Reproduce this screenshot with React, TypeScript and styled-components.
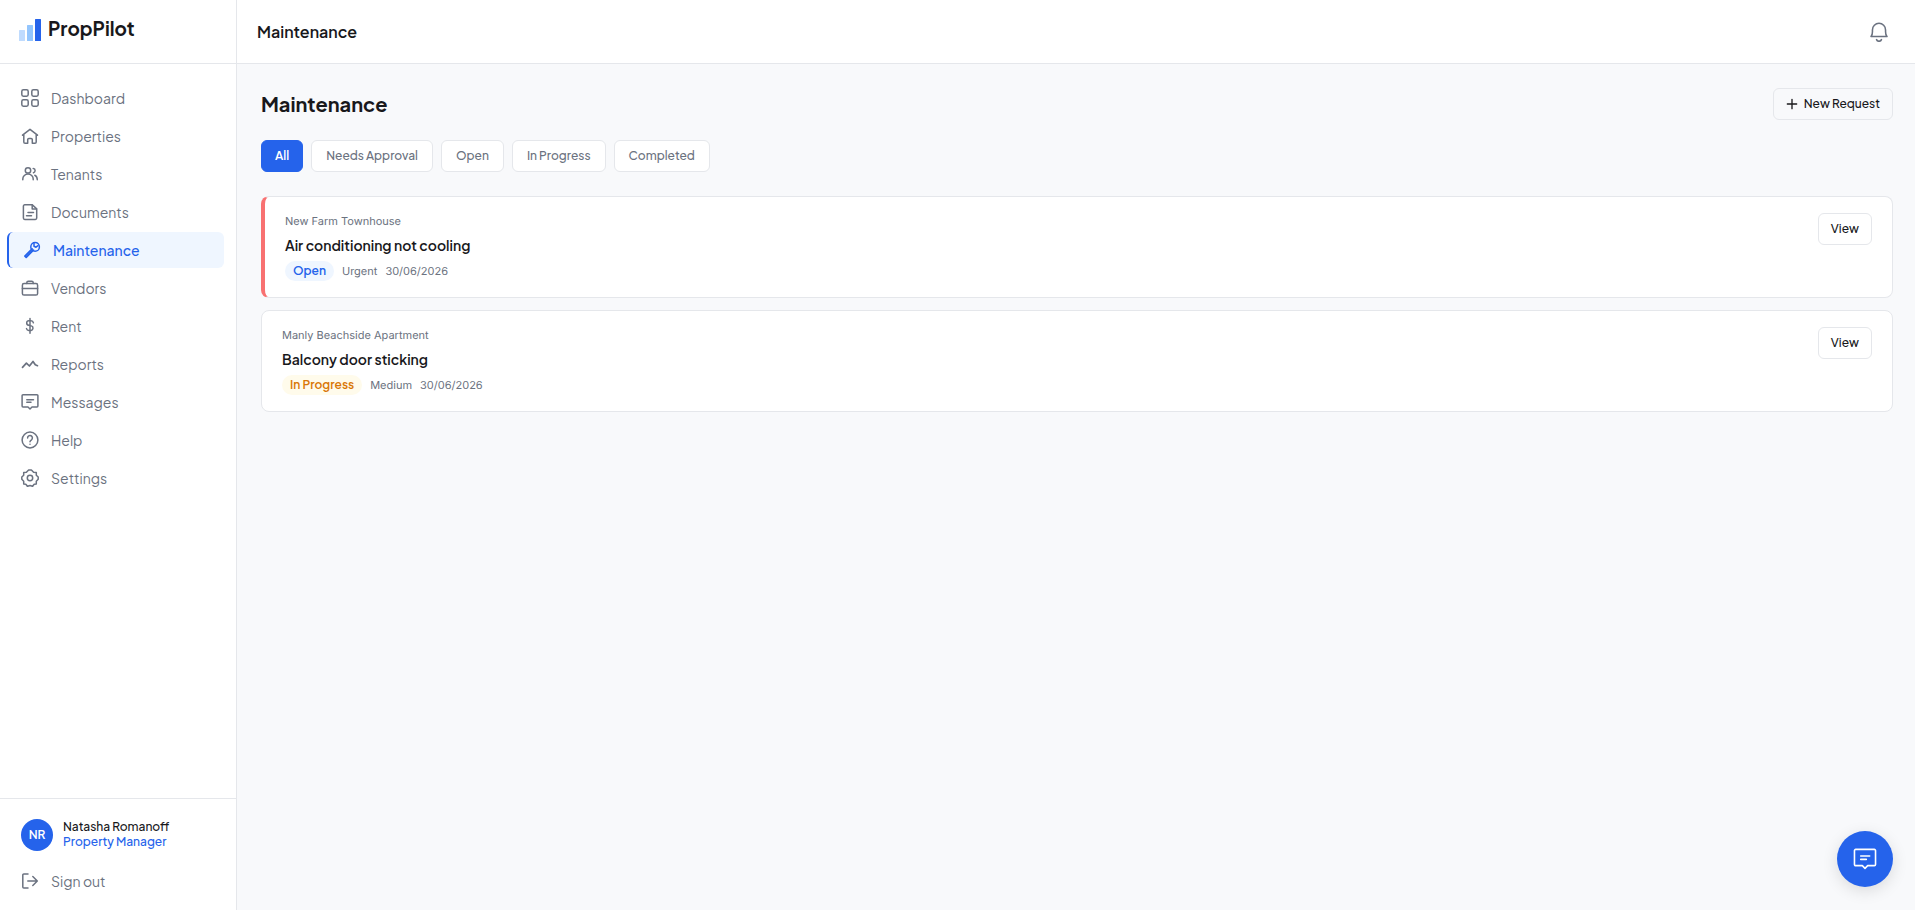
import React, { useState } from "react";
import styled, { createGlobalStyle, css } from "styled-components";

const color = {
  blue: "#2563eb",
  blueSoft: "#eff6ff",
  ink: "#18181b",
  muted: "#6b7280",
  line: "#e5e7eb",
  page: "#f8f9fb",
  red: "#f87171",
  amber: "#d97706",
  amberSoft: "#fffbeb",
};

const GlobalStyle = createGlobalStyle`
  *, *::before, *::after { box-sizing: border-box; }
  body {
    margin: 0;
    background: ${color.page};
    color: ${color.ink};
    font-family: "Plus Jakarta Sans", Inter, "Liberation Sans", sans-serif;
    font-size: 14px;
    line-height: 20px;
  }
  button { font-family: inherit; cursor: pointer; }
  h1, h2, p, ul { margin: 0; padding: 0; }
  ul { list-style: none; }
`;

const Shell = styled.div`
  display: flex;
  min-height: 100vh;
`;

const Sidebar = styled.aside`
  position: sticky;
  top: 0;
  flex: none;
  display: flex;
  flex-direction: column;
  width: 237px;
  height: 100vh;
  background: #fff;
  border-right: 1px solid ${color.line};
`;

const Brand = styled.a`
  flex: none;
  display: flex;
  align-items: flex-start;
  gap: 7px;
  height: 64px;
  padding: 19px 19px 0;
  border-bottom: 1px solid ${color.line};
  color: ${color.ink};
  font-size: 19px;
  line-height: 18px;
  font-weight: 700;
  text-decoration: none;
`;

const Nav = styled.nav`
  flex: 1;
  min-height: 0;
  padding: 16px 12px 16px 7px;
  overflow-y: auto;
`;

const NavList = styled.ul`
  display: flex;
  flex-direction: column;
  gap: 2px;
`;

const navItem = css`
  display: flex;
  align-items: center;
  gap: 12px;
  width: 100%;
  height: 36px;
  padding: 0 14px;
  border: 0;
  border-radius: 6px;
  background: transparent;
  color: ${color.muted};
  font-size: 14px;
  line-height: 20px;
  text-decoration: none;
`;

const NavLink = styled.a<{ $active: boolean }>`
  ${navItem}
  ${(p) =>
    p.$active &&
    css`
      border-left: 2px solid ${color.blue};
      background: ${color.blueSoft};
      color: ${color.blue};
      font-weight: 500;
    `}
`;

const SignOut = styled.button`
  ${navItem}
`;

const SidebarFooter = styled.footer`
  flex: none;
  display: flex;
  flex-direction: column;
  gap: 12px;
  padding: 20px 12px 11px 7px;
  border-top: 1px solid ${color.line};
`;

const UserRow = styled.div`
  display: flex;
  align-items: flex-start;
  gap: 10px;
  padding: 0 14px;
`;

const Avatar = styled.span`
  flex: none;
  display: grid;
  place-items: center;
  width: 32px;
  height: 32px;
  border-radius: 50%;
  background: ${color.blue};
  color: #fff;
  font-size: 12px;
  font-weight: 600;
`;

const UserName = styled.p`
  font-size: 12px;
  line-height: 15px;
  font-weight: 500;
`;

const UserRole = styled(UserName)`
  color: ${color.blue};
`;

const Column = styled.div`
  flex: 1;
  min-width: 0;
  display: flex;
  flex-direction: column;
`;

const TopBar = styled.header`
  display: flex;
  align-items: center;
  justify-content: space-between;
  height: 64px;
  padding: 0 26px 0 20px;
  background: #fff;
  border-bottom: 1px solid ${color.line};
`;

const TopTitle = styled.p`
  font-size: 16px;
  line-height: 24px;
  font-weight: 600;
`;

const IconButton = styled.button`
  display: grid;
  place-items: center;
  padding: 0;
  border: 0;
  background: transparent;
  color: ${color.muted};
`;

const Content = styled.main`
  flex: 1;
  padding: 24px 22px 24px 24px;
`;

const HeadRow = styled.div`
  display: flex;
  align-items: center;
  justify-content: space-between;
  margin-bottom: 20px;
`;

const PageTitle = styled.h1`
  font-size: 20px;
  line-height: 28px;
  font-weight: 700;
`;

const Button = styled.button<{ $plain?: boolean }>`
  flex: none;
  display: inline-flex;
  align-items: center;
  gap: 6px;
  height: 32px;
  padding: 0 12px;
  border: 1px solid ${color.line};
  border-radius: 6px;
  background: ${(p) => (p.$plain ? "transparent" : "#fff")};
  color: ${color.ink};
  font-size: 12px;
  line-height: 18px;
  font-weight: 500;
`;

const Filters = styled.div`
  display: flex;
  flex-wrap: wrap;
  gap: 8px;
  margin-bottom: 24px;
`;

const Filter = styled.button<{ $active: boolean }>`
  height: 32px;
  padding: 0 ${(p) => (p.$active ? 13 : 14)}px;
  border: 1px solid ${(p) => (p.$active ? color.blue : color.line)};
  border-radius: 6px;
  background: ${(p) => (p.$active ? color.blue : "#fff")};
  color: ${(p) => (p.$active ? "#fff" : color.muted)};
  font-size: 12px;
  line-height: 18px;
  font-weight: ${(p) => (p.$active ? 600 : 500)};
`;

const CardList = styled.ul`
  display: flex;
  flex-direction: column;
  gap: 12px;
`;

const Card = styled.li<{ $urgent: boolean }>`
  display: flex;
  align-items: flex-start;
  justify-content: space-between;
  gap: 16px;
  padding: 16px 20px;
  border: 1px solid ${color.line};
  border-radius: 8px;
  background: #fff;
  ${(p) => p.$urgent && `border-left: 4px solid ${color.red};`}
`;

const CardBody = styled.div`
  display: flex;
  flex-direction: column;
  gap: 4px;
`;

const Small = styled.span`
  color: ${color.muted};
  font-family: Inter, "Liberation Sans", sans-serif;
  font-size: 11px;
  line-height: 16px;
  text-rendering: geometricPrecision;
`;

const CardTitle = styled.h2`
  font-size: 14px;
  line-height: 24px;
  font-weight: 600;
`;

const Meta = styled.div`
  display: flex;
  align-items: center;
  gap: 8px;
`;

const Badge = styled.span<{ $status: Status }>`
  padding: 0 8px;
  border-radius: 10px;
  background: ${(p) => (p.$status === "Open" ? color.blueSoft : color.amberSoft)};
  color: ${(p) => (p.$status === "Open" ? color.blue : color.amber)};
  font-size: 12px;
  line-height: 20px;
  font-weight: 600;
`;

const ChatButton = styled.button`
  position: fixed;
  right: 22px;
  bottom: 23px;
  display: grid;
  place-items: center;
  width: 56px;
  height: 56px;
  padding: 0;
  border: 0;
  border-radius: 50%;
  background: ${color.blue};
  color: #fff;
  box-shadow: 0 4px 16px rgba(0, 0, 0, 0.12);
`;

type Status = "Open" | "In Progress";

const Icon = ({ size = 18, weight = 1.5, children }: { size?: number; weight?: number; children: React.ReactNode }) => (
  <svg
    width={size}
    height={size}
    viewBox="0 0 18 18"
    fill="none"
    stroke="currentColor"
    strokeWidth={weight}
    strokeLinecap="round"
    strokeLinejoin="round"
    aria-hidden="true"
  >
    {children}
  </svg>
);

const messageShape = (
  <>
    <path d="M2 1.800h14a.9.9 0 0 1 .9.9v10.400a.9.9 0 0 1-.9.9h-5L9 16l-2-2H2a.9.9 0 0 1-.9-.9V2.700A.9.9 0 0 1 2 1.800z" />
    <path d="M5.800 6.700h6.700M5.800 9.300h4.200" />
  </>
);

const navItems: { label: string; icon: React.ReactNode }[] = [
  {
    label: "Dashboard",
    icon: (
      <>
        <rect x=".8" y=".8" width="6.400" height="6.400" rx="1.600" />
        <rect x="10.800" y=".8" width="6.400" height="6.400" rx="1.600" />
        <rect x=".8" y="10.800" width="6.400" height="6.400" rx="1.600" />
        <rect x="10.800" y="10.800" width="6.400" height="6.400" rx="1.600" />
      </>
    ),
  },
  {
    label: "Properties",
    icon: <path d="M1.500 8.200 9 2.300l7.500 5.900M2.800 7.400V14.900a1.300 1.300 0 0 0 1.300 1.300h2.600v-3.600a1.200 1.200 0 0 1 1.200-1.200h2.200a1.200 1.200 0 0 1 1.200 1.200v3.600h2.600a1.300 1.300 0 0 0 1.300-1.300V7.400" />,
  },
  {
    label: "Tenants",
    icon: (
      <>
        <circle cx="7" cy="5.400" r="2.700" />
        <path d="M1.800 14.800v-.7a5.200 5 0 0 1 10.400 0v.7M12.200 3.600c1 .1 1.900.8 1.900 1.900s-.8 1.900-1.600 2.200M13.800 10.200c1.700.7 2.500 2.300 2.500 4.600" />
      </>
    ),
  },
  {
    label: "Documents",
    icon: (
      <>
        <path d="M3.700 1.800h7.600l4.400 4.100v9.200a1.300 1.300 0 0 1-1.300 1.300H3.700a1.300 1.300 0 0 1-1.300-1.300v-12a1.300 1.300 0 0 1 1.300-1.300z" />
        <path d="M11.200 1.900V6h4.300M7 9.600h5.500M5.500 12.700h5" />
      </>
    ),
  },
  {
    label: "Maintenance",
    icon: (
      <>
        <circle cx="12.100" cy="5.900" r="4.300" />
        <path d="M9.100 7.900 1.900 15.100M10.400 9.200l-7.200 7.100M1.900 15.100l1.300 1.200" strokeWidth="1.700" />
        <path d="M11 2.500v2.800l2 .900 2-1.500" />
      </>
    ),
  },
  {
    label: "Vendors",
    icon: (
      <>
        <rect x="1.400" y="4.600" width="15.200" height="11.400" rx="1.600" />
        <path d="M5.800 4.500v-.8a1.500 1.500 0 0 1 1.500-1.500h3.400a1.500 1.500 0 0 1 1.500 1.500v.8M1.400 9.600h15.200" />
      </>
    ),
  },
  {
    label: "Rent",
    icon: <path d="M9 1.600v14.600M12.400 5.800A2.500 2.500 0 0 0 9.900 3.800H8.100a2.200 2.200 0 0 0-.4 4.400l2.600.7a2.300 2.300 0 0 1-.3 4.500H8A2.500 2.500 0 0 1 5.500 11.600" />,
  },
  {
    label: "Reports",
    icon: <path d="M1.500 12.400 5.400 8.200l3 2.800 3.600-4.600 2.300 3.400 2.200.900" strokeWidth="1.700" />,
  },
  { label: "Messages", icon: messageShape },
  {
    label: "Help",
    icon: (
      <>
        <circle cx="9" cy="9" r="7.900" />
        <path d="M6.600 6.900a2.400 2.400 0 1 1 3.900 1.900C9.600 9.400 9 9.800 9 10.700M9 13.200v.1" />
      </>
    ),
  },
  {
    label: "Settings",
    icon: (
      <>
        <path d="M6.500 17.200 4.800 15.200 2.700 14.900V12.200L.8 10.300V8L2.700 6.200V3.500L5.400 3.200 7.600.9H10.400L12.600 3.200 15.300 3.500V6.200L17.200 8V10.300L15.300 12.200V14.900L13.200 15.200 11.500 17.200" />
        <path d="M6.500 17.200 9 16.600l2.500.6" />
        <circle cx="9" cy="9" r="2.700" />
      </>
    ),
  },
];

const filters = ["All", "Needs Approval", "Open", "In Progress", "Completed"];

const requests: { property: string; title: string; status: Status; priority: string; date: string }[] = [
  {
    property: "New Farm Townhouse",
    title: "Air conditioning not cooling",
    status: "Open",
    priority: "Urgent",
    date: "30/06/2026",
  },
  {
    property: "Manly Beachside Apartment",
    title: "Balcony door sticking",
    status: "In Progress",
    priority: "Medium",
    date: "30/06/2026",
  },
];

export default function App() {
  const [filter, setFilter] = useState("All");
  const shown = requests.filter((r) => filter === "All" || r.status === filter);

  return (
    <>
      <GlobalStyle />
      <Shell>
        <Sidebar>
          <Brand href="#">
            <svg width="22" height="22" viewBox="0 0 22 22" aria-hidden="true">
              <rect y="11" width="6" height="11" rx=".5" fill="#bfdbfe" />
              <rect x="8" y="6" width="6" height="16" rx=".5" fill="#93c5fd" />
              <rect x="16" width="6" height="22" rx=".5" fill={color.blue} />
            </svg>
            PropPilot
          </Brand>
          <Nav aria-label="Primary">
            <NavList>
              {navItems.map(({ label, icon }) => (
                <li key={label}>
                  <NavLink
                    href={`#${label.toLowerCase()}`}
                    $active={label === "Maintenance"}
                    aria-current={label === "Maintenance" ? "page" : undefined}
                  >
                    <Icon>{icon}</Icon>
                    {label}
                  </NavLink>
                </li>
              ))}
            </NavList>
          </Nav>
          <SidebarFooter>
            <UserRow>
              <Avatar>NR</Avatar>
              <div>
                <UserName>Natasha Romanoff</UserName>
                <UserRole>Property Manager</UserRole>
              </div>
            </UserRow>
            <SignOut type="button">
              <Icon>
                <path d="M7 2H2.800a1 1 0 0 0-1 1v12a1 1 0 0 0 1 1H7M6.800 9h9.400M11.800 4.500 16.300 9l-4.500 4.500" />
              </Icon>
              Sign out
            </SignOut>
          </SidebarFooter>
        </Sidebar>
        <Column>
          <TopBar>
            <TopTitle>Maintenance</TopTitle>
            <IconButton type="button" aria-label="Notifications">
              <Icon size={20} weight={1.4}>
                <path d="M1.800 13.100c.9-.9 1.300-2.200 1.300-4.400V7.100a5.900 5.900 0 0 1 11.800 0v1.600c0 2.200.4 3.500 1.300 4.400zM6.800 15.900a2.400 2.400 0 0 0 4.400 0" />
              </Icon>
            </IconButton>
          </TopBar>
          <Content>
            <HeadRow>
              <PageTitle>Maintenance</PageTitle>
              <Button type="button" $plain>
                <Icon size={12} weight={2}>
                  <path d="M9 2v14M2 9h14" />
                </Icon>
                New Request
              </Button>
            </HeadRow>
            <Filters role="group" aria-label="Filter by status">
              {filters.map((f) => (
                <Filter
                  key={f}
                  type="button"
                  $active={f === filter}
                  aria-pressed={f === filter}
                  onClick={() => setFilter(f)}
                >
                  {f}
                </Filter>
              ))}
            </Filters>
            <CardList>
              {shown.map((r) => (
                <Card key={r.title} $urgent={r.priority === "Urgent"}>
                  <CardBody>
                    <Small>{r.property}</Small>
                    <CardTitle>{r.title}</CardTitle>
                    <Meta>
                      <Badge $status={r.status}>{r.status}</Badge>
                      <Small>{r.priority}</Small>
                      <Small>{r.date}</Small>
                    </Meta>
                  </CardBody>
                  <Button type="button">View</Button>
                </Card>
              ))}
            </CardList>
          </Content>
        </Column>
      </Shell>
      <ChatButton type="button" aria-label="Open chat">
        <Icon size={24} weight={1.200}>
          {messageShape}
        </Icon>
      </ChatButton>
    </>
  );
}
